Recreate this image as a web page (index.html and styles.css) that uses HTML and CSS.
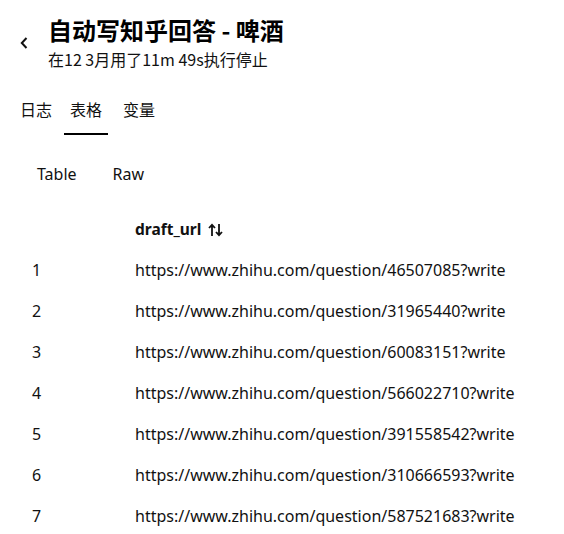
FILE: index.html
```html
<!DOCTYPE html>
<html lang="zh">
<head>
<meta charset="utf-8">
<link rel="stylesheet" href="styles.css">
</head>
<body>
<div class="page">
  <header class="head">
    <button class="back" aria-label="back">
      <svg width="8" height="12" viewBox="0 0 8 12"><path d="M6.5 1 L1.8 6 L6.5 11" fill="none" stroke="#111" stroke-width="2"/></svg>
    </button>
    <div class="titles">
      <h1 class="title">自动写知乎回答 - 啤酒</h1>
      <div class="sub">在12 3月用了11m 49s执行停止</div>
    </div>
  </header>
  <nav class="tabs">
    <span class="tab">日志</span>
    <span class="tab active">表格</span>
    <span class="tab">变量</span>
  </nav>
  <div class="views">
    <span class="view">Table</span>
    <span class="view">Raw</span>
  </div>
  <table class="grid">
    <thead>
      <tr><th class="idx"></th><th class="col">draft_url <svg class="sort" width="16" height="14" viewBox="0 0 16 14"><path d="M4 13 V2 M1 5 L4 1.8 L7 5 M11 1 V12 M8 9 L11 12.2 L14 9" fill="none" stroke="#111" stroke-width="1.8"/></svg></th></tr>
    </thead>
    <tbody>
      <tr><td class="idx">1</td><td>https://www.zhihu.com/question/46507085?write</td></tr>
      <tr><td class="idx">2</td><td>https://www.zhihu.com/question/31965440?write</td></tr>
      <tr><td class="idx">3</td><td>https://www.zhihu.com/question/60083151?write</td></tr>
      <tr><td class="idx">4</td><td>https://www.zhihu.com/question/566022710?write</td></tr>
      <tr><td class="idx">5</td><td>https://www.zhihu.com/question/391558542?write</td></tr>
      <tr><td class="idx">6</td><td>https://www.zhihu.com/question/310666593?write</td></tr>
      <tr><td class="idx">7</td><td>https://www.zhihu.com/question/587521683?write</td></tr>
    </tbody>
  </table>
</div>
</body>
</html>
```

FILE: styles.css
```css
* { box-sizing: border-box; }
html, body { margin: 0; padding: 0; background: #fff; }
body {
  font-family: "Noto Sans", "Noto Sans CJK SC", sans-serif;
  color: #111;
  overflow: hidden;
}
.page { padding: 0 0 0 20px; }
.head {
  display: flex;
  align-items: flex-start;
  padding-top: 14px;
}
.back {
  border: 0; background: none; padding: 0;
  width: 28px; height: 12px;
  margin-top: 23px;
  display: flex; justify-content: flex-start;
}
.titles { display: flex; flex-direction: column; }
.title {
  margin: 0;
  font-family: "Noto Sans CJK SC", sans-serif;
  font-size: 24px;
  font-weight: 700;
  line-height: 32px;
  color: #000;
}
.sub {
  font-family: "Noto Sans CJK SC", sans-serif;
  font-size: 16px;
  line-height: 22px;
  margin-top: 2px;
}
.tabs {
  display: flex;
  gap: 18px;
  margin-top: 28px;
  font-family: "Noto Sans CJK SC", sans-serif;
  font-size: 16px;
}
.tab {
  line-height: 22px;
  padding-bottom: 13px;
  border-bottom: 2px solid transparent;
}
.tab.active {
  border-bottom-color: #000;
  padding: 0 6px 13px;
  margin: 0 -6px;
}
.tabs .tab:nth-child(3) { margin-left: 3px; }
.views {
  display: flex;
  gap: 36px;
  margin-top: 28px;
  padding-left: 17px;
  font-size: 16px;
  line-height: 22px;
}
.grid {
  border-collapse: collapse;
  margin-top: 28px;
  font-size: 16px;
}
.grid th { font-weight: 700; text-align: left; padding: 2px 0 0; height: 30px; font-size: 15.5px; }
.grid td { padding: 0; height: 41px; }
.grid .idx { width: 115px; padding-left: 12px; }
.grid tbody tr:first-child td { padding-top: 6px; height: 47px; }
.sort { vertical-align: -2px; margin-left: 3px; }
```
